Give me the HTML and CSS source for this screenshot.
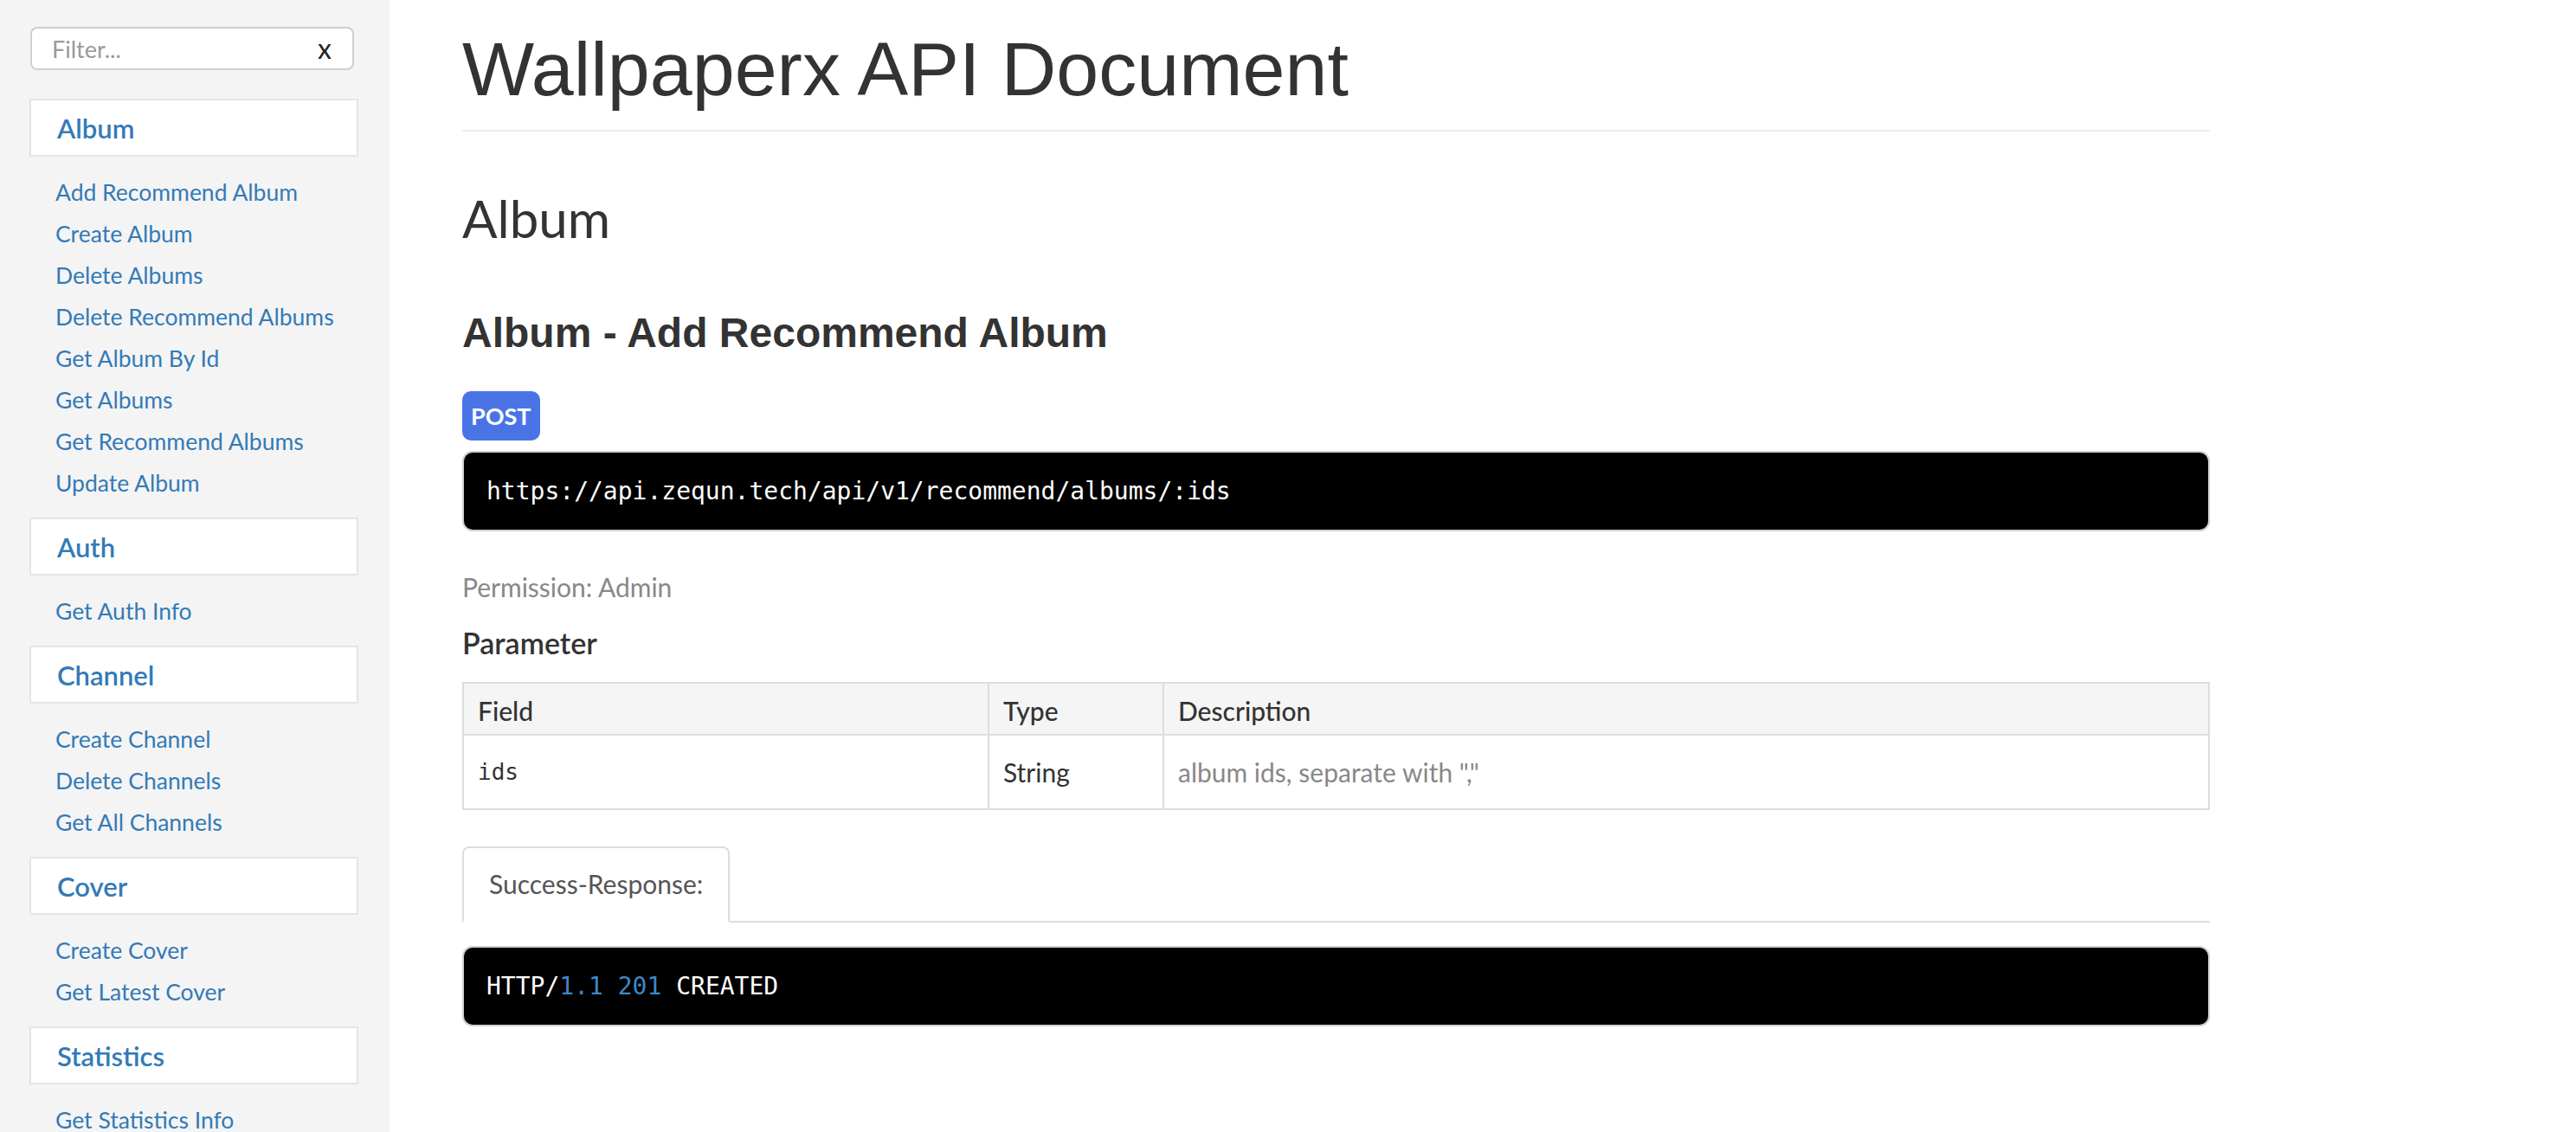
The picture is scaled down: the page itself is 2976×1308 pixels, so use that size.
FILE: index.html
```html
<!DOCTYPE html>
<html lang="en">
<head>
<meta charset="utf-8">
<title>Wallpaperx API Document</title>
<link rel="stylesheet" href="styles.css">
</head>
<body>
<div class="page">
  <aside class="sidebar">
    <div class="filter">
      <input type="text" placeholder="Filter...">
      <span class="filter-clear">x</span>
    </div>
    <nav class="nav">
      <div class="nav-header">Album</div>
      <ul class="nav-items">
        <li><a href="#">Add Recommend Album</a></li>
        <li><a href="#">Create Album</a></li>
        <li><a href="#">Delete Albums</a></li>
        <li><a href="#">Delete Recommend Albums</a></li>
        <li><a href="#">Get Album By Id</a></li>
        <li><a href="#">Get Albums</a></li>
        <li><a href="#">Get Recommend Albums</a></li>
        <li><a href="#">Update Album</a></li>
      </ul>
      <div class="nav-header">Auth</div>
      <ul class="nav-items">
        <li><a href="#">Get Auth Info</a></li>
      </ul>
      <div class="nav-header">Channel</div>
      <ul class="nav-items">
        <li><a href="#">Create Channel</a></li>
        <li><a href="#">Delete Channels</a></li>
        <li><a href="#">Get All Channels</a></li>
      </ul>
      <div class="nav-header">Cover</div>
      <ul class="nav-items">
        <li><a href="#">Create Cover</a></li>
        <li><a href="#">Get Latest Cover</a></li>
      </ul>
      <div class="nav-header">Statistics</div>
      <ul class="nav-items">
        <li><a href="#">Get Statistics Info</a></li>
      </ul>
    </nav>
  </aside>
  <main class="main">
    <div class="content">
      <h1 class="title">Wallpaperx API Document</h1>
      <hr class="rule">
      <h2 class="group-title">Album</h2>
      <h3 class="article-title">Album - Add Recommend Album</h3>
      <span class="method">POST</span>
      <pre class="code"><code>https://api.zequn.tech/api/v1/recommend/albums/:ids</code></pre>
      <p class="permission">Permission: Admin</p>
      <h4 class="section-title">Parameter</h4>
      <table class="params">
        <colgroup>
          <col class="col-field">
          <col class="col-type">
          <col class="col-desc">
        </colgroup>
        <thead>
          <tr><th>Field</th><th>Type</th><th>Description</th></tr>
        </thead>
        <tbody>
          <tr>
            <td class="mono">ids</td>
            <td>String</td>
            <td class="desc">album ids, separate with ","</td>
          </tr>
        </tbody>
      </table>
      <div class="tabs">
        <div class="tab">Success-Response:</div>
      </div>
      <pre class="code code-response"><code>HTTP/<span class="num">1.1</span> <span class="num">201</span> CREATED</code></pre>
    </div>
  </main>
</div>
</body>
</html>
```
FILE: styles.css
```css
html, body {
  margin: 0;
  padding: 0;
}

body {
  font-family: Lato, "Open Sans", sans-serif;
  color: #333;
  background: #fff;
}

.page {
  display: flex;
  height: 100vh;
  overflow: hidden;
}

/* Sidebar */
.sidebar {
  flex: 0 0 450px;
  box-sizing: border-box;
  background: #f4f4f4;
  padding-top: 31px;
  overflow: hidden;
}

.filter {
  margin-left: 35px;
  width: 374px;
  height: 50px;
  box-sizing: border-box;
  border: 2px solid #cfcfcf;
  border-radius: 8px;
  background: #fff;
  display: flex;
  align-items: center;
  padding: 0 24px 0 23px;
}

.filter input {
  flex: 1;
  min-width: 0;
  border: 0;
  outline: 0;
  padding: 0;
  background: transparent;
  font-family: Lato, "Open Sans", sans-serif;
  font-size: 27px;
  color: #333;
}

.filter input::placeholder {
  color: #9a9a9a;
}

.filter-clear {
  font-size: 32px;
  line-height: 1;
  color: #222;
}

.nav {
  margin: 33px 0 0 34px;
  width: 380px;
}

.nav-header {
  height: 67px;
  box-sizing: border-box;
  border: 2px solid #e5e5e5;
  background: #fff;
  padding: 2px 0 0 30px;
  font-size: 31px;
  font-weight: 600;
  line-height: 61px;
  color: #337ab7;
}

.nav-items {
  list-style: none;
  margin: 16px 0 17px;
  padding: 0;
}

.nav-items a {
  display: block;
  padding: 2px 0 0 30px;
  font-size: 26.5px;
  line-height: 46px;
  color: #337ab7;
  text-decoration: none;
}

/* Main */
.main {
  flex: 1;
  padding: 36px 0 0 84px;
  overflow: hidden;
}

.content {
  width: 2019px;
}

.title {
  margin: 0;
  font-family: "Liberation Sans", Arial, sans-serif;
  font-weight: 400;
  font-size: 88px;
  line-height: 1;
  color: #333;
}

.rule {
  margin: 26px 0 0;
  height: 2px;
  border: 0;
  background: #eee;
}

.group-title {
  margin: 70px 0 0;
  font-weight: 400;
  font-size: 60px;
  line-height: 1;
  color: #333;
}

.article-title {
  margin: 79px 0 0;
  font-family: "Liberation Sans", Arial, sans-serif;
  font-weight: 700;
  font-size: 48px;
  line-height: 1;
  color: #333;
}

.method {
  display: flex;
  align-items: center;
  width: fit-content;
  height: 57px;
  margin-top: 43px;
  padding: 0 10px;
  border-radius: 10px;
  background: #4a74e6;
  color: #fff;
  font-weight: 700;
  font-size: 27px;
}

.code {
  margin: 12px 0 0;
  height: 93px;
  box-sizing: border-box;
  border: 2px solid #cfcfcf;
  border-radius: 12px;
  background: #000;
  color: #fff;
  display: flex;
  align-items: center;
  padding: 0 26px;
  font-family: "DejaVu Sans Mono", "Liberation Mono", monospace;
  font-size: 28px;
  white-space: pre;
}

.code code {
  font-family: inherit;
  font-size: inherit;
}

.code-response {
  margin-top: 27px;
}

.num {
  color: #3f88c5;
}

.permission {
  margin: 46px 0 0;
  font-size: 30px;
  line-height: 36px;
  color: #888;
}

.section-title {
  margin: 30px 0 0;
  font-weight: 600;
  font-size: 34px;
  line-height: 1;
  color: #333;
}

.params {
  margin-top: 28px;
  width: 2019px;
  table-layout: fixed;
  border-collapse: separate;
  border-spacing: 0;
  border-top: 2px solid #ddd;
  border-left: 2px solid #ddd;
  font-size: 30px;
}

.col-field { width: 607px; }
.col-type { width: 202px; }
.col-desc { width: 1208px; }

.params th,
.params td {
  border-right: 2px solid #ddd;
  border-bottom: 2px solid #ddd;
  text-align: left;
  padding-left: 16px;
  padding-right: 16px;
}

.params th {
  background: #f5f5f5;
  font-weight: 500;
  line-height: 34px;
  padding-top: 14px;
  padding-bottom: 10px;
  color: #333;
}

.params td {
  line-height: 36px;
  padding-top: 24px;
  padding-bottom: 24px;
  color: #333;
}

.params td.mono {
  font-family: "DejaVu Sans Mono", "Liberation Mono", monospace;
  font-size: 26px;
}

.params td.desc {
  color: #888;
}

.tabs {
  margin-top: 42px;
  display: flex;
  border-bottom: 2px solid #ddd;
}

.tab {
  margin-bottom: -2px;
  border: 2px solid #ddd;
  border-bottom-color: #fff;
  border-radius: 8px 8px 0 0;
  background: #fff;
  padding: 23px 29px 25px;
  font-size: 30px;
  line-height: 36px;
  color: #555;
}
```
